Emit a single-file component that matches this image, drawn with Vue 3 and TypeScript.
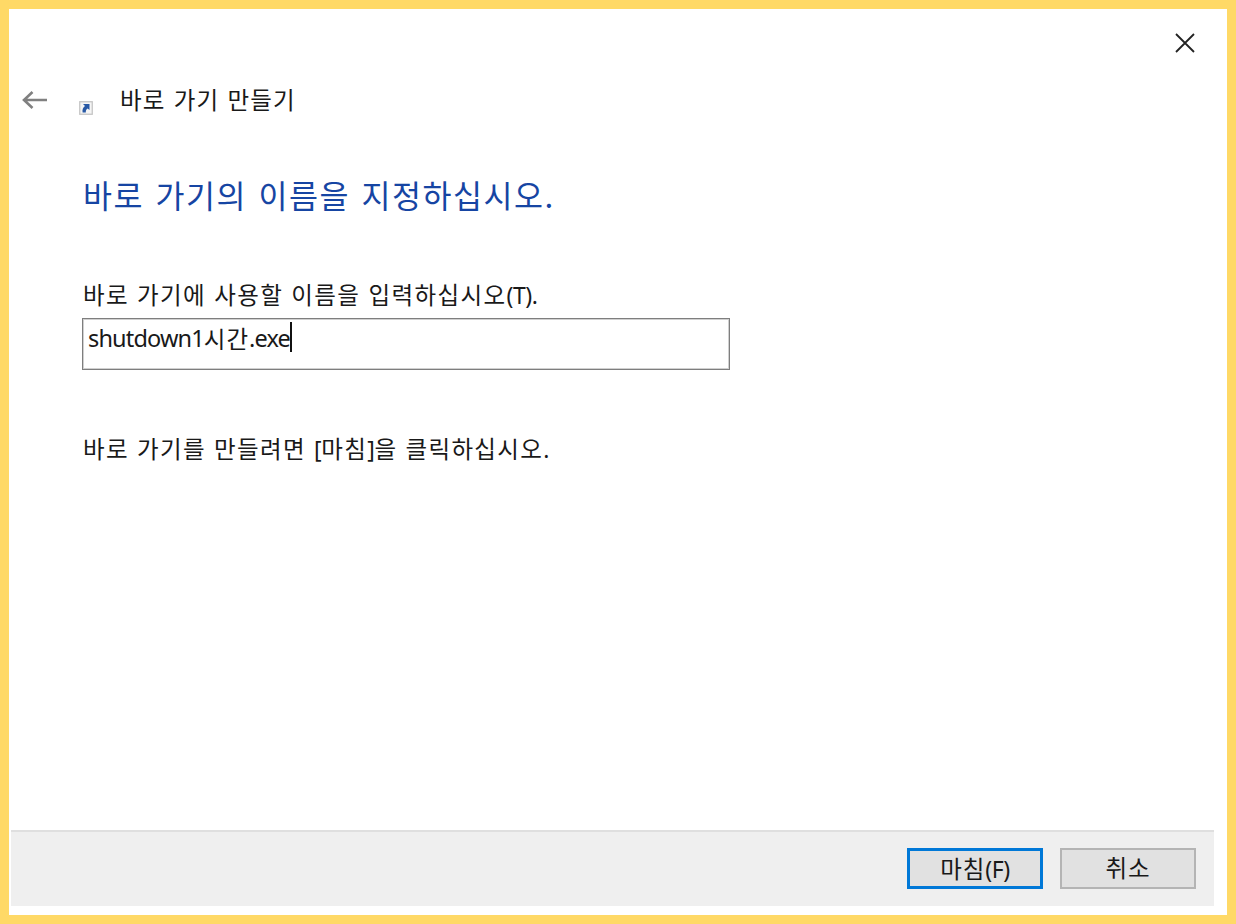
<script setup lang="ts">
import { computed, ref } from 'vue'

const shortcutName = ref<string>('shutdown1시간.exe')

// Splits the name into Hangul and Latin runs, which are set in different fonts.
const nameRuns = computed(() =>
  (shortcutName.value.match(/[가-힣]+|[^가-힣]+/g) ?? []).map((text) => ({
    text,
    hangul: /[가-힣]/.test(text),
  })),
)
</script>

<template>
  <main class="frame">
    <div class="titlebar">
      <button class="icon-button" aria-label="닫기">
        <svg width="22" height="22" viewBox="0 0 22 22">
          <path d="M2 2 L20 20 M20 2 L2 20" fill="none" stroke="#222" stroke-width="1.8" />
        </svg>
      </button>
    </div>
    <header class="header">
      <button class="icon-button back" aria-label="뒤로">
        <svg width="26" height="20" viewBox="0 0 26 20">
          <path d="M25 10 H2 M10.5 2 L2 10 L10.5 18" fill="none" stroke="#808080" stroke-width="2.6" />
        </svg>
      </button>
      <svg class="shortcut" width="14" height="14" viewBox="0 0 14 14">
        <rect x="0.75" y="0.75" width="12.5" height="12.5" fill="#f5f5f5" stroke="#c5c5c5" stroke-width="1.3" />
        <path d="M4 3 H10.5 V9 L8.6 7.6 C7.2 8.5 6.8 9.6 6.8 11.5 H3.6 C3.1 8.6 4 6.8 6 5.1 Z" fill="#2859a5" />
      </svg>
      <span class="caption">바로 가기 만들기</span>
    </header>
    <section class="content">
      <h1>바로 가기의 이름을 지정하십시오.</h1>
      <label class="prompt">바로 가기에 사용할 이름을 입력하십시오<span class="latin">(T).</span></label>
      <div class="field">
        <span v-for="(run, i) in nameRuns" :key="i" class="value" :class="{ hangul: run.hangul }">{{ run.text }}</span><i class="caret"></i>
      </div>
      <p class="hint">바로 가기를 만들려면 <span class="latin">[</span>마침<span class="latin">]</span>을 클릭하십시오<span class="latin">.</span></p>
    </section>
    <footer class="footer">
      <button class="action primary">마침<span class="latin">(F)</span></button>
      <button class="action">취소</button>
    </footer>
  </main>
</template>

<style>
body {
  margin: 0;
}
</style>

<style scoped>
.frame {
  box-sizing: border-box;
  width: 1236px;
  height: 924px;
  border: 9px solid #ffd966;
  background: #fff;
  display: flex;
  flex-direction: column;
  color: #191919;
  font-family: "Noto Sans CJK KR", sans-serif;
  font-size: 23.5px;
  font-weight: 400;
}
button {
  font: inherit;
  color: inherit;
  padding: 0;
}
svg {
  display: block;
}
.icon-button {
  border: 0;
  background: transparent;
}
.titlebar {
  display: flex;
  justify-content: flex-end;
  align-items: flex-start;
  height: 51px;
  padding: 23px 31px 0 0;
  box-sizing: border-box;
}
.header {
  box-sizing: border-box;
  display: flex;
  align-items: flex-start;
  height: 83px;
  padding: 21px 0 0 13px;
}
.back {
  margin-top: 9px;
}
.shortcut {
  margin: 20px 0 0 31px;
}
.caption {
  margin: -1px 0 0 27px;
  line-height: 38px;
  letter-spacing: 1.1px;
  word-spacing: 2px;
  white-space: nowrap;
}
.content {
  flex: 1;
  padding: 27px 0 0 73px;
}
h1 {
  margin: 0 0 0 1px;
  font-size: 31.5px;
  line-height: 48px;
  font-weight: 400;
  color: #1645a3;
  letter-spacing: 1.5px;
  word-spacing: 3px;
  white-space: nowrap;
}
.prompt {
  display: block;
  margin: 58px 0 0 1px;
  height: 36px;
  line-height: 36px;
  letter-spacing: 1.37px;
  word-spacing: 1.5px;
  white-space: nowrap;
}
.latin {
  font-family: "Noto Sans", sans-serif;
  font-size: 23px;
  line-height: 1;
  letter-spacing: -0.4px;
}
.field {
  box-sizing: border-box;
  width: 648px;
  height: 52px;
  margin-top: 6px;
  border: 1px solid #7e7e7e;
  box-shadow: inset 0 0 0 1px #d0d0d0;
  padding: 3px 0 0 5px;
  display: flex;
}
.value {
  font-family: "Noto Sans", sans-serif;
  font-size: 23.5px;
  line-height: 32px;
  letter-spacing: -0.85px;
}
.value.hangul {
  font-family: "Noto Sans CJK KR", sans-serif;
  letter-spacing: 1px;
}
.caret {
  width: 2px;
  height: 30px;
  background: #111;
}
.hint {
  margin: 60px 0 0 1px;
  line-height: 36px;
  letter-spacing: 1.35px;
  word-spacing: 1.5px;
  white-space: nowrap;
}
.footer {
  box-sizing: border-box;
  height: 76px;
  margin: 0 13px 9px 2px;
  border-top: 2px solid #dfdfdf;
  background: #efefef;
  display: flex;
  justify-content: flex-end;
  gap: 17px;
  padding: 16px 18px 0 0;
}
.action {
  box-sizing: border-box;
  width: 136px;
  height: 41px;
  border: 2px solid #b4b4b4;
  background: #e1e1e1;
  line-height: 34px;
  letter-spacing: 0.8px;
  padding-bottom: 3px;
}
.primary {
  border: 3px solid #0078d7;
}
</style>
